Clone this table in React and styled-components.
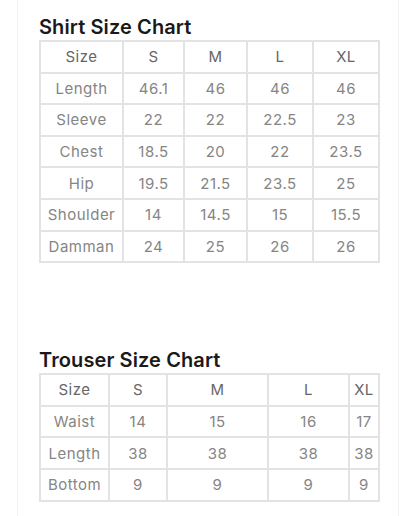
import React from 'react';
import styled, { createGlobalStyle } from 'styled-components';

const GlobalStyle = createGlobalStyle`
	html, body {
		margin: 0;
		padding: 0;
		background: #ffffff;
	}
	body {
		font-family: Inter, "Open Sans", sans-serif;
	}
`;

const Card = styled.div`
	box-sizing: border-box;
	margin: 0 17px;
	height: 516px;
	border-left: 1px solid #f1f1f1;
	border-right: 1px solid #f1f1f1;
	padding: 15px 21px 0 21px;
`;

const Title = styled.h2`
	margin: 0 0 1px 0;
	font-size: 20px;
	line-height: 24px;
	font-weight: 600;
	color: #1a1a1a;
	letter-spacing: 0.1px;
`;

const Section = styled.section`
	margin-top: ${(props) => props.gap || 0}px;
`;

const Table = styled.table`
	border-collapse: collapse;
	width: 339px;
	table-layout: fixed;
`;

const Cell = styled.td`
	border: 2px solid #e3e3e3;
	height: 29.6px;
	padding: 0;
	text-align: center;
	font-size: 15px;
	font-weight: 400;
	color: ${(props) => (props.head ? '#666666' : '#858585')};
	letter-spacing: 0.5px;
`;

const shirt = {
	widths: [83, 61, 63, 66, 66],
	rows: [
		['Size', 'S', 'M', 'L', 'XL'],
		['Length', '46.1', '46', '46', '46'],
		['Sleeve', '22', '22', '22.5', '23'],
		['Chest', '18.5', '20', '22', '23.5'],
		['Hip', '19.5', '21.5', '23.5', '25'],
		['Shoulder', '14', '14.5', '15', '15.5'],
		['Damman', '24', '25', '26', '26']
	]
};

const trouser = {
	widths: [69, 58, 101, 81, 30],
	rows: [
		['Size', 'S', 'M', 'L', 'XL'],
		['Waist', '14', '15', '16', '17'],
		['Length', '38', '38', '38', '38'],
		['Bottom', '9', '9', '9', '9']
	]
};

const SizeTable = ({ data }) => (
	<Table>
		<colgroup>
			{data.widths.map((w, i) => <col key={i} style={{ width: w }} />)}
		</colgroup>
		<tbody>
			{data.rows.map((row, r) => (
				<tr key={r}>
					{row.map((val, c) => (
						<Cell key={c} head={r === 0 ? 1 : 0}>
							{val}
						</Cell>
					))}
				</tr>
			))}
		</tbody>
	</Table>
);

const App = () => {
	return (
		<>
			<GlobalStyle />
			<Card>
				<Section>
					<Title>Shirt Size Chart</Title>
					<SizeTable data={shirt} />
				</Section>
				<Section gap={85}>
					<Title>Trouser Size Chart</Title>
					<SizeTable data={trouser} />
				</Section>
			</Card>
		</>
	);
};

export default App;
